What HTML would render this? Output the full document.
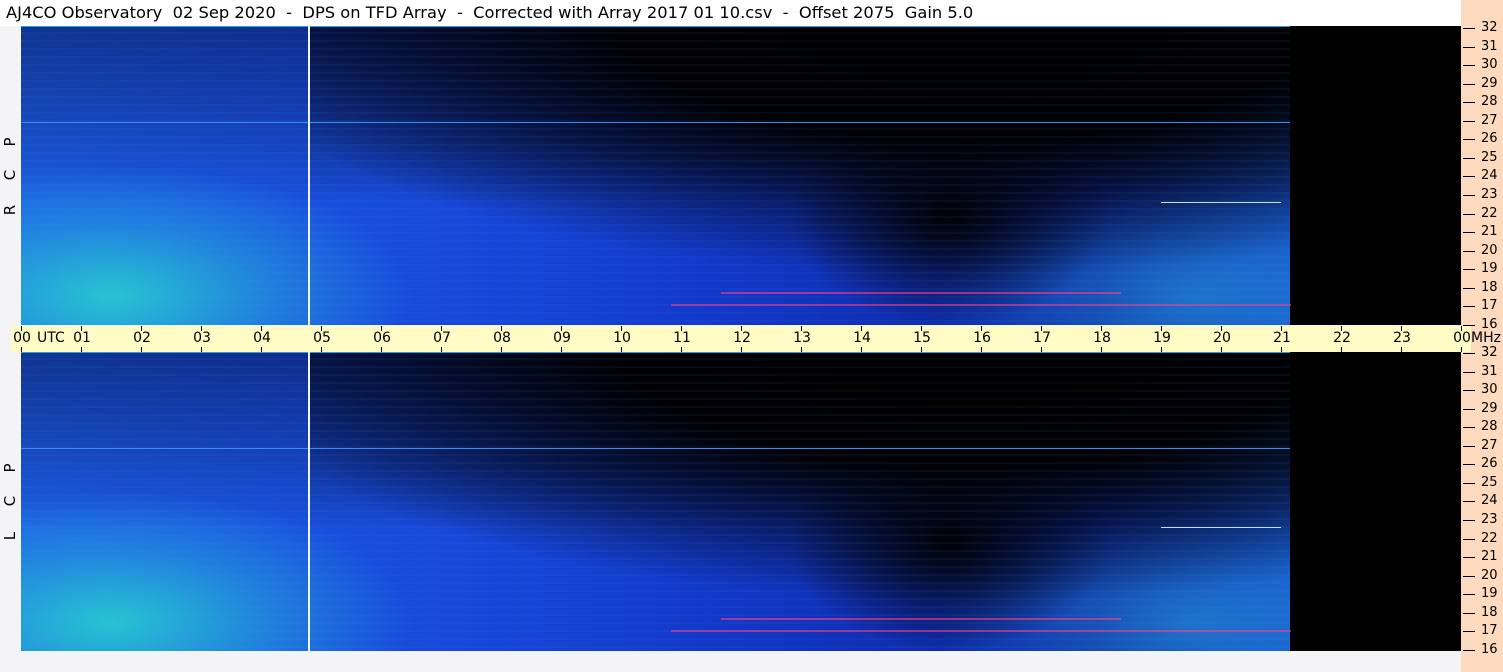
<!DOCTYPE html>
<html><head><meta charset="utf-8"><style>
*{margin:0;padding:0;box-sizing:border-box}
body{width:1503px;height:672px;background:#f4f4f7;position:relative;overflow:hidden;font-family:"DejaVu Sans","Liberation Sans",sans-serif;color:#000}
.title{position:absolute;left:6px;top:3px;font-size:16.3px;white-space:pre}
.titlebg{position:absolute;left:0;top:0;width:1462px;height:26px;background:#fff}
.peach{position:absolute;left:1461px;top:0;width:42px;height:672px;background:#fdd9bd}
.panel{position:absolute;left:21px;width:1440px;height:299px;background:#000;overflow:hidden}
.spec{position:absolute;left:0;top:0;width:1269px;height:299px;
background:
radial-gradient(ellipse 300px 130px at 90px 270px,rgba(40,215,205,.85) 0%,rgba(40,190,215,.4) 55%,rgba(0,0,0,0) 100%),
radial-gradient(ellipse 260px 110px at 1170px 270px,rgba(40,170,220,.5) 0%,rgba(0,0,0,0) 100%),
linear-gradient(to bottom,rgba(0,0,40,.45) 0%,rgba(0,0,40,.2) 35%,rgba(0,0,0,0) 60%),
linear-gradient(to right,#1c5ee6 0%,#1a52e0 20%,#1644d6 40%,#1238c8 55%,#0f2eb0 70%,#0e2aa4 85%,#1650cc 100%);}
.dark{position:absolute;left:288px;top:0;width:981px;height:299px;
background:
radial-gradient(ellipse 160px 110px at 640px 190px,rgba(0,0,0,.95) 0%,rgba(0,0,0,0) 100%),
radial-gradient(ellipse 760px 250px at 660px 0px,rgba(0,0,0,1) 0%,rgba(0,0,0,.97) 45%,rgba(0,0,0,0) 100%),
linear-gradient(to bottom,rgba(0,0,20,.45) 0%,rgba(0,0,0,0) 60%);}
.lines{position:absolute;left:0;top:0;width:1269px;height:299px;
background:repeating-linear-gradient(to bottom,rgba(0,0,0,0) 0,rgba(0,0,0,0) 6px,rgba(90,150,255,.12) 7px,rgba(0,0,0,0) 8px);}
.vl{position:absolute;left:287px;top:0;width:2px;height:299px;background:#f0f6ff}
.hl{position:absolute;left:0;width:1269px;height:1px;background:#3a8cf0}
.axis{position:absolute;left:11px;top:326px;width:1460px;height:26px;background:#fefcc4}
.tk{position:absolute;width:1px;height:5px;background:#000}
.xl{position:absolute;top:330px;font-size:14px;transform:translateX(-50%)}
.yl{position:absolute;left:1481px;font-size:13px}
.yt{position:absolute;left:1463px;width:12px;height:1px;background:#000}
.sl{position:absolute;left:2px;width:16px;height:16px;line-height:16px;text-align:center;font-size:15px;transform:rotate(-90deg)}
.dot{position:absolute;height:2px}
</style></head><body>
<div class="titlebg"></div>
<div class="title">AJ4CO Observatory  02 Sep 2020  -  DPS on TFD Array  -  Corrected with Array 2017 01 10.csv  -  Offset 2075  Gain 5.0</div>
<div class="peach"></div>

<div class="panel" style="top:26px"><div class="spec"></div><div class="dark"></div><div class="lines"></div>
<div class="hl" style="top:0;background:#2a9cf0"></div><div class="hl" style="top:96px"></div>
<div class="dot" style="top:266px;left:700px;width:400px;background:rgba(255,60,140,.6)"></div>
<div class="dot" style="top:278px;left:650px;width:620px;background:rgba(255,60,140,.55)"></div>
<div class="dot" style="top:176px;left:1140px;width:120px;height:1px;background:#c0e0ff"></div>
<div class="vl"></div></div>

<div class="panel" style="top:352px"><div class="spec"></div><div class="dark"></div><div class="lines"></div>
<div class="hl" style="top:0;background:#2a9cf0"></div><div class="hl" style="top:96px"></div>
<div class="dot" style="top:175px;left:1140px;width:120px;height:1px;background:#c0e0ff"></div>
<div class="dot" style="top:266px;left:700px;width:400px;background:rgba(255,60,140,.6)"></div>
<div class="dot" style="top:278px;left:650px;width:620px;background:rgba(255,60,140,.55)"></div>
<div class="vl"></div></div>

<div class="axis"></div>
<div id="ax"></div>
<div class="sl" style="top:134px">P</div>
<div class="sl" style="top:167px">C</div>
<div class="sl" style="top:202px">R</div>
<div class="sl" style="top:460px">P</div>
<div class="sl" style="top:493px">C</div>
<div class="sl" style="top:528px">L</div>
<script>
var h='';
var labs=['00','01','02','03','04','05','06','07','08','09','10','11','12','13','14','15','16','17','18','19','20','21','22','23','00'];
for(var i=0;i<25;i++){var x=21+i*60;
h+='<div class="tk" style="left:'+x+'px;top:326px"></div><div class="tk" style="left:'+x+'px;top:347px"></div>';
h+='<div class="xl" style="left:'+(x+1)+'px">'+labs[i]+'</div>';}
h+='<div class="xl" style="left:37px;transform:none">UTC</div><div class="xl" style="left:1471px;transform:none">MHz</div>';
for(var m=32;m>=16;m--){var k=32-m;
var y1=28+k*18.56,y2=353+k*18.56;
h+='<div class="yt" style="top:'+Math.round(y1)+'px"></div><div class="yl" style="top:'+Math.round(y1-8)+'px">'+m+'</div>';
h+='<div class="yt" style="top:'+Math.round(y2)+'px"></div><div class="yl" style="top:'+Math.round(y2-8)+'px">'+m+'</div>';}
document.getElementById('ax').innerHTML=h;
</script>
</body></html>
